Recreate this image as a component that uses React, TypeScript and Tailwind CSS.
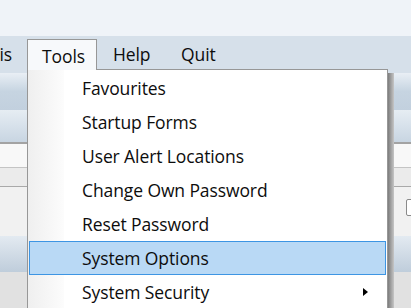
const items = [
  "Favourites",
  "Startup Forms",
  "User Alert Locations",
  "Change Own Password",
  "Reset Password",
  "System Options",
  "System Security",
];

function ToolsMenu() {
  return (
    <div className="absolute left-[27px] top-[69px] z-10 flex h-[250px]">
      <div className="relative w-[361px] border border-[#979797] bg-white pt-[1px]">
        <div className="absolute left-0 top-0 bottom-0 w-[36px] bg-gradient-to-r from-[#efefef] to-[#fcfcfc]" />
        {items.map((label) => {
          const active = label === "System Options";
          return (
            <div
              key={label}
              className={
                "relative mx-[1px] flex h-[34px] items-center " +
                (active ? "border border-[#3d95e3] bg-[#b9d9f5] pl-[52px]" : "pl-[53px]")
              }
            >
              <span>{label}</span>
              {label === "System Security" && (
                <span className="ml-auto mr-[18px] h-0 w-0 border-y-[4px] border-l-[5px] border-y-transparent border-l-black" />
              )}
            </div>
          );
        })}
      </div>
      <div className="mt-[4px] w-[6px] bg-gradient-to-r from-[#7d7d7d] to-[#c6c6c6]" />
    </div>
  );
}

export default function App() {
  return (
    <div
      className="relative h-[308px] w-[411px] overflow-hidden bg-[#eef2f7] text-[17.5px] tracking-[-0.1px] text-[#0d0d0d]"
      style={{ fontFamily: '"Open Sans", "Noto Sans", sans-serif' }}
    >
      <div className="h-[36px] bg-[#eff3f8]" />
      <div className="flex h-[37px] items-start bg-[#d6e0ea]">
        <div className="flex h-[37px] w-[27px] items-center justify-end pr-[15px]">is</div>
        <div className="relative z-20 mt-[3px] flex h-[31px] w-[70px] items-start border-x border-t border-[#979797] bg-[#f7f9fb] pl-[14px] pt-[3px]">
          Tools
        </div>
        <div className="flex h-[37px] w-[69px] items-center pl-[16px]">Help</div>
        <div className="flex h-[37px] items-center pl-[15px]">Quit</div>
      </div>

      <div className="h-[37px] bg-gradient-to-b from-[#e9eff5] via-[#c6d4e1] to-[#c2d0de]" />
      <div className="h-[32px] bg-gradient-to-b from-[#e6edf3] to-[#c8d5e2]" />
      <div className="h-[2px] bg-[#a3a3a3]" />
      <div className="h-[23px] bg-[#f8f8f8]" />
      <div className="h-px bg-[#c4c4c4]" />
      <div className="h-[18px] bg-[#ebebeb]" />
      <div className="h-px bg-[#a9a9a9]" />
      <div className="flex h-[49px] items-start justify-end bg-[#f1f1f1] pt-[12px]">
        <div className="mr-[-10px] h-[17px] w-[15px] rounded-[2px] border border-[#8a8a8a] bg-white" />
      </div>
      <div className="h-[36px] bg-gradient-to-b from-[#e3eaf1] to-[#bfcddb]" />
      <div className="h-[40px] bg-[#e1e1e1]" />

      <ToolsMenu />
    </div>
  );
}
